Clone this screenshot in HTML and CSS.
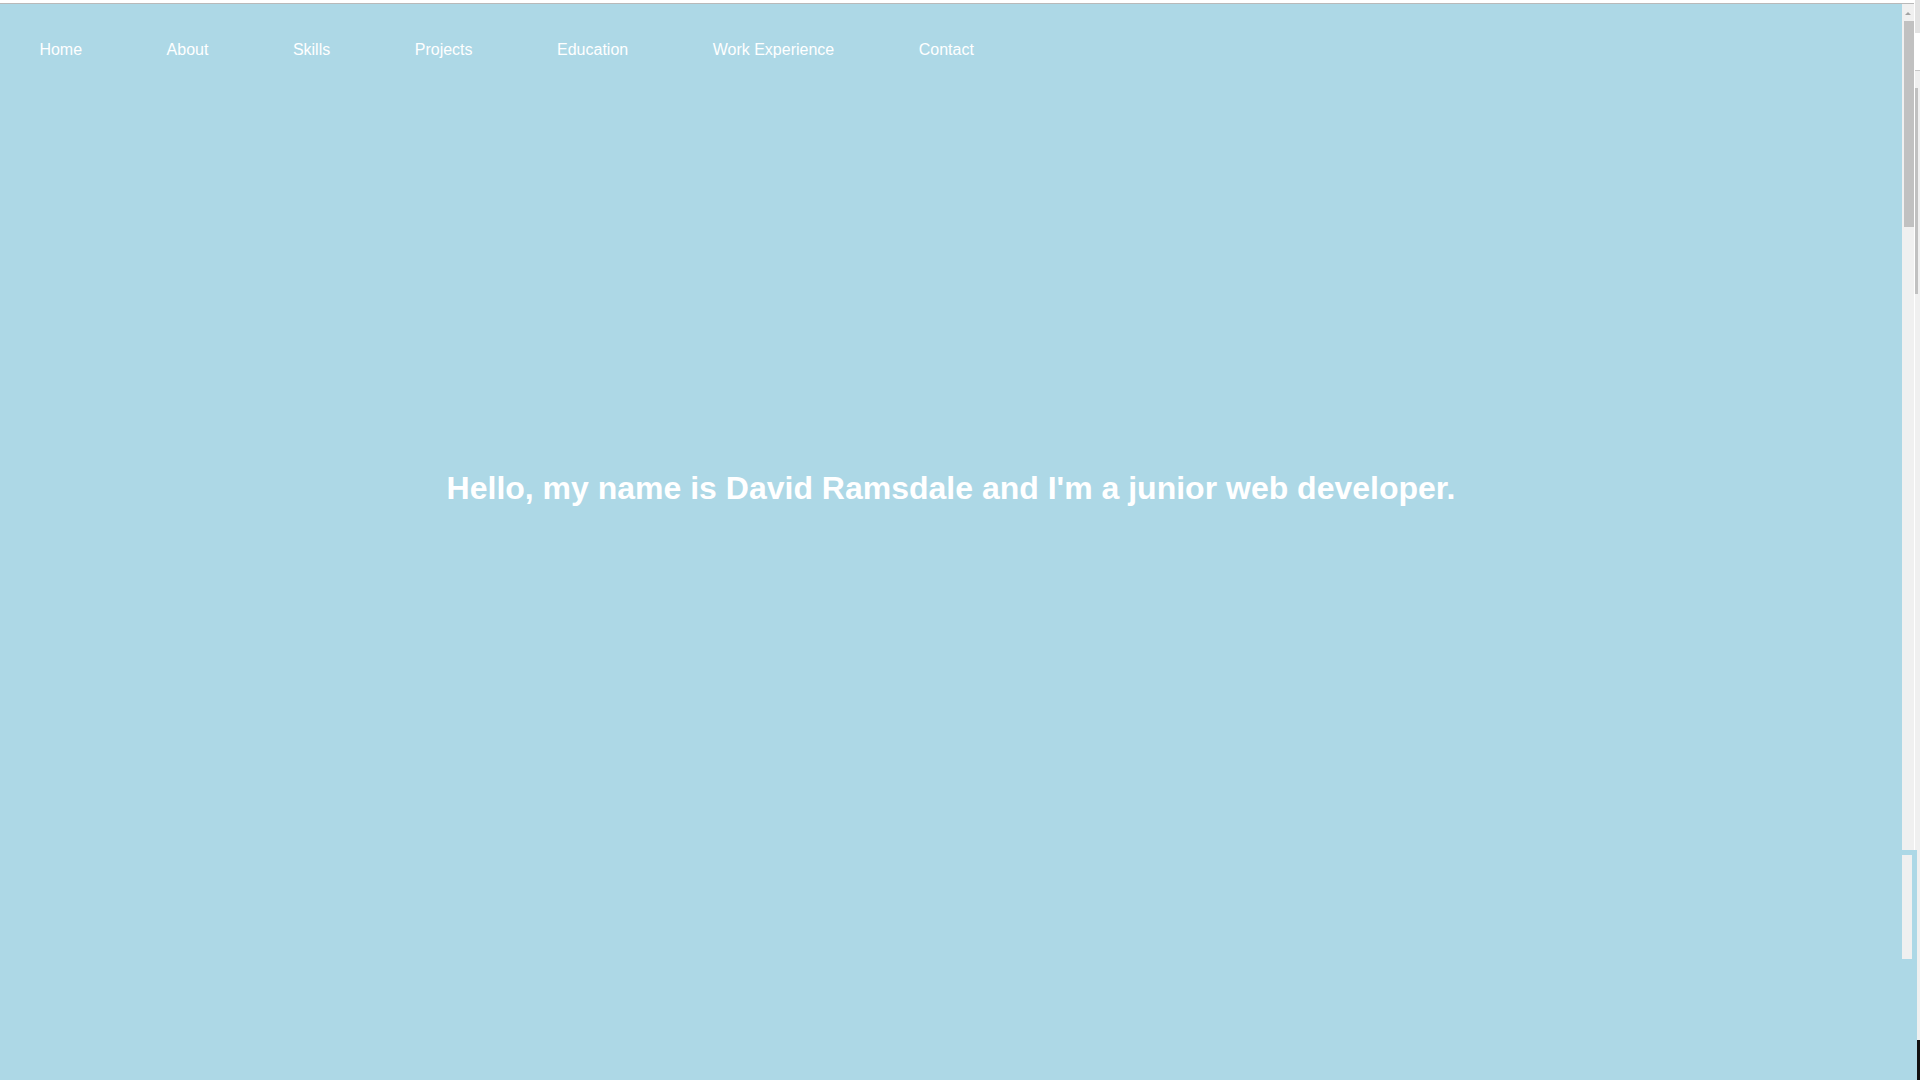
FILE: index.html
```html
<!DOCTYPE html>
<html lang="en">
<head>
<meta charset="utf-8">
<title>David Ramsdale</title>
<link rel="stylesheet" href="styles.css">
</head>
<body>
<div class="topbar"></div>
<div class="content">
  <nav class="nav">
    <ul class="nav-list">
      <li><a href="#home">Home</a></li>
      <li><a href="#about">About</a></li>
      <li><a href="#skills">Skills</a></li>
      <li><a href="#projects">Projects</a></li>
      <li><a href="#education">Education</a></li>
      <li><a href="#work">Work Experience</a></li>
      <li><a href="#contact">Contact</a></li>
    </ul>
  </nav>
  <section class="hero" id="home">
    <h1 class="hero-title">Hello, my name is David Ramsdale and I'm a junior web developer.</h1>
  </section>
</div>

<div class="sb-track"></div>
<div class="sb-arrow"></div>
<div class="sb-thumb"></div>
<div class="sb-edge"></div>
<div class="sb-outer-top"></div>
<div class="sb-outer-white"></div>
<div class="sb-outer-track"></div>
<div class="sb-outer-thumb"></div>
<div class="sb-box"></div>
<div class="sb-low"></div>
<div class="sb-black"></div>
</body>
</html>
```
FILE: styles.css
```css
html, body {
  margin: 0;
  padding: 0;
}
body {
  position: relative;
  height: 1080px;
  overflow: hidden;
  background: #add8e6;
  font-family: "Liberation Sans", Arial, sans-serif;
  color: #ffffff;
}
.topbar {
  height: 3px;
  background: #ffffff;
  border-bottom: 1px solid #b9b9b9;
}
.content {
  margin-right: 18px;
}
.nav {
  padding: 36.5px 0 0 39.4px;
}
.nav-list {
  list-style: none;
  margin: 0;
  padding: 0;
  display: flex;
  gap: 84.5px;
}
.nav-list li {
  font-size: 16px;
  line-height: 18px;
}
.nav-list a {
  color: #ffffff;
  text-decoration: none;
}
.hero {
  padding-top: 411.5px;
}
.hero-title {
  margin: 0;
  font-size: 32px;
  line-height: 37px;
  font-weight: bold;
  text-align: center;
}

/* window scrollbar artifacts on the right edge */
.sb-track {
  position: absolute;
  left: 1902px;
  top: 4px;
  width: 12px;
  height: 846px;
  background: #f0f0f0;
}
.sb-arrow {
  position: absolute;
  left: 1905px;
  top: 12px;
  width: 0;
  height: 0;
  border-left: 3.5px solid transparent;
  border-right: 3.5px solid transparent;
  border-bottom: 3.5px solid #a3a3a3;
}
.sb-thumb {
  position: absolute;
  left: 1904px;
  top: 21px;
  width: 10px;
  height: 206px;
  background: #c1c1c1;
}
.sb-edge {
  position: absolute;
  left: 1914px;
  top: 0;
  width: 1px;
  height: 850px;
  background: #ffffff;
}
.sb-outer-top {
  position: absolute;
  left: 1915px;
  top: 0;
  width: 5px;
  height: 33px;
  background: #e3e3e3;
}
.sb-outer-white {
  position: absolute;
  left: 1915px;
  top: 33px;
  width: 5px;
  height: 37px;
  background: #ffffff;
  border-bottom: 1px solid #c8c8c8;
}
.sb-outer-track {
  position: absolute;
  left: 1915px;
  top: 71px;
  width: 5px;
  height: 779px;
  background: #f0f0f0;
}
.sb-outer-thumb {
  position: absolute;
  left: 1915px;
  top: 88px;
  width: 3px;
  height: 206px;
  background: #c1c1c1;
}
.sb-box {
  position: absolute;
  left: 1902px;
  top: 855px;
  width: 10px;
  height: 104px;
  background: #f0f0f0;
}
.sb-low {
  position: absolute;
  left: 1917px;
  top: 850px;
  width: 3px;
  height: 190px;
  background: #f0f0f0;
}
.sb-black {
  position: absolute;
  left: 1917px;
  top: 1040px;
  width: 3px;
  height: 40px;
  background: #111111;
}
```
